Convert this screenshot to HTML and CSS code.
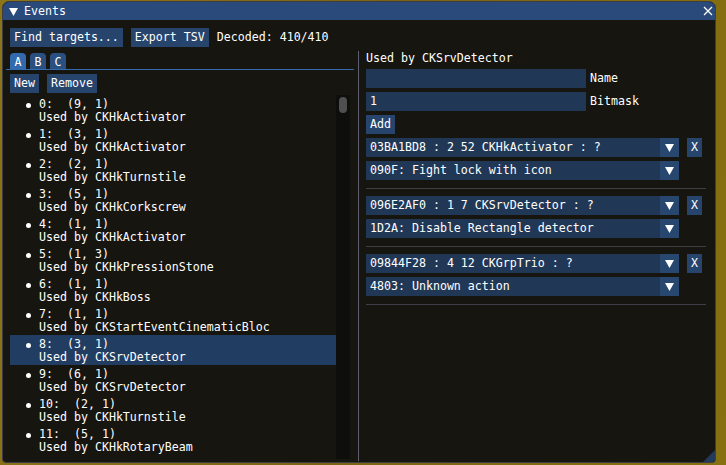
FILE: index.html
```html
<!DOCTYPE html>
<html>
<head>
<meta charset="utf-8">
<link rel="stylesheet" href="styles.css">
</head>
<body>
<div class="win">
  <div class="title">
    <svg class="collapse" width="9" height="8" viewBox="0 0 9 8"><polygon points="0,0 9,0 4.5,8" fill="#fff"/></svg>
    <span class="title-text">Events</span>
    <svg class="close" width="10" height="10" viewBox="0 0 10 10"><path d="M1 1 L9 9 M9 1 L1 9" stroke="#fff" stroke-width="1.3"/></svg>
  </div>
  <div class="body">
    <div class="toolbar">
      <div class="btn">Find targets...</div>
      <div class="btn">Export TSV</div>
      <span class="txt">Decoded: 410/410</span>
    </div>
    <div class="cols">
      <div class="left">
        <div class="tabbar">
          <div class="tab active">A</div>
          <div class="tab">B</div>
          <div class="tab">C</div>
        </div>
        <div class="btnrow">
          <div class="btn">New</div>
          <div class="btn">Remove</div>
        </div>
        <div class="listwrap">
          <div class="list">
            <div class="row"><span class="bullet"></span><div class="rt"><div>0:  (9, 1)</div><div>Used by CKHkActivator</div></div></div>
            <div class="row"><span class="bullet"></span><div class="rt"><div>1:  (3, 1)</div><div>Used by CKHkActivator</div></div></div>
            <div class="row"><span class="bullet"></span><div class="rt"><div>2:  (2, 1)</div><div>Used by CKHkTurnstile</div></div></div>
            <div class="row"><span class="bullet"></span><div class="rt"><div>3:  (5, 1)</div><div>Used by CKHkCorkscrew</div></div></div>
            <div class="row"><span class="bullet"></span><div class="rt"><div>4:  (1, 1)</div><div>Used by CKHkActivator</div></div></div>
            <div class="row"><span class="bullet"></span><div class="rt"><div>5:  (1, 3)</div><div>Used by CKHkPressionStone</div></div></div>
            <div class="row"><span class="bullet"></span><div class="rt"><div>6:  (1, 1)</div><div>Used by CKHkBoss</div></div></div>
            <div class="row"><span class="bullet"></span><div class="rt"><div>7:  (1, 1)</div><div>Used by CKStartEventCinematicBloc</div></div></div>
            <div class="row selected"><span class="bullet"></span><div class="rt"><div>8:  (3, 1)</div><div>Used by CKSrvDetector</div></div></div>
            <div class="row"><span class="bullet"></span><div class="rt"><div>9:  (6, 1)</div><div>Used by CKSrvDetector</div></div></div>
            <div class="row"><span class="bullet"></span><div class="rt"><div>10:  (2, 1)</div><div>Used by CKHkTurnstile</div></div></div>
            <div class="row"><span class="bullet"></span><div class="rt"><div>11:  (5, 1)</div><div>Used by CKHkRotaryBeam</div></div></div>
          </div>
          <div class="scrollbar"><div class="thumb"></div></div>
        </div>
      </div>
      <div class="vsep"></div>
      <div class="right">
        <div class="line">Used by CKSrvDetector</div>
        <div class="field"><div class="input"></div><span class="lbl">Name</span></div>
        <div class="field"><div class="input">1</div><span class="lbl">Bitmask</span></div>
        <div class="field"><div class="btn">Add</div></div>

        <div class="field">
          <div class="combo"><span class="ctext">03BA1BD8 : 2 52 CKHkActivator : ?</span><span class="arrow"><svg width="9" height="8" viewBox="0 0 9 8"><polygon points="0,0 9,0 4.5,8" fill="#fff"/></svg></span></div>
          <div class="btn xbtn">X</div>
        </div>
        <div class="field">
          <div class="combo"><span class="ctext">090F: Fight lock with icon</span><span class="arrow"><svg width="9" height="8" viewBox="0 0 9 8"><polygon points="0,0 9,0 4.5,8" fill="#fff"/></svg></span></div>
        </div>
        <div class="hsep"></div>

        <div class="field first">
          <div class="combo"><span class="ctext">096E2AF0 : 1 7 CKSrvDetector : ?</span><span class="arrow"><svg width="9" height="8" viewBox="0 0 9 8"><polygon points="0,0 9,0 4.5,8" fill="#fff"/></svg></span></div>
          <div class="btn xbtn">X</div>
        </div>
        <div class="field">
          <div class="combo"><span class="ctext">1D2A: Disable Rectangle detector</span><span class="arrow"><svg width="9" height="8" viewBox="0 0 9 8"><polygon points="0,0 9,0 4.5,8" fill="#fff"/></svg></span></div>
        </div>
        <div class="hsep"></div>

        <div class="field first">
          <div class="combo"><span class="ctext">09844F28 : 4 12 CKGrpTrio : ?</span><span class="arrow"><svg width="9" height="8" viewBox="0 0 9 8"><polygon points="0,0 9,0 4.5,8" fill="#fff"/></svg></span></div>
          <div class="btn xbtn">X</div>
        </div>
        <div class="field">
          <div class="combo"><span class="ctext">4803: Unknown action</span><span class="arrow"><svg width="9" height="8" viewBox="0 0 9 8"><polygon points="0,0 9,0 4.5,8" fill="#fff"/></svg></span></div>
        </div>
        <div class="hsep"></div>
      </div>
    </div>
  </div>
  <div class="grip"></div>
</div>
</body>
</html>
```
FILE: styles.css
```css
html, body {
  margin: 0;
  padding: 0;
}
body {
  width: 726px;
  height: 465px;
  overflow: hidden;
  background: linear-gradient(100deg, #8c7418 0%, #7a6412 50%, #86700f 100%);
  font-family: "DejaVu Sans Mono", "Liberation Mono", monospace;
  font-size: 11.62px;
  line-height: 13px;
  color: #fff;
}
.win {
  position: relative;
  margin: 1px 0 0 2px;
  width: 714px;
  height: 462px;
  box-sizing: border-box;
  border: 1px solid #3d3d46;
  border-radius: 7px 7px 4px 4px;
  background: #16150f;
  overflow: hidden;
  display: flex;
  flex-direction: column;
}
.title {
  height: 18px;
  flex: none;
  background: #294a7a;
  display: flex;
  align-items: center;
  padding: 0 0 0 6px;
}
.collapse {
  margin-top: 1px;
}
.title-text {
  margin-left: 6px;
  flex: 1;
}
.close {
  margin-right: 2px;
  margin-top: -1px;
}
.body {
  flex: 1;
  padding: 8px 7px 0 7px;
  display: flex;
  flex-direction: column;
  min-height: 0;
}
.toolbar {
  display: flex;
  gap: 8px;
  align-items: center;
  height: 19px;
  flex: none;
}
.btn {
  height: 19px;
  box-sizing: border-box;
  padding: 3px 4px;
  background: #26446c;
  white-space: pre;
  flex: none;
}
.txt {
  white-space: pre;
}
.cols {
  margin-top: 4px;
  flex: 1;
  display: flex;
  min-height: 0;
}
.left {
  width: 340px;
  flex: none;
  display: flex;
  flex-direction: column;
}
.tabbar {
  position: relative;
  display: flex;
  gap: 4px;
  padding-top: 2px;
  height: 17px;
  box-sizing: content-box;
}
.tabbar::after {
  content: "";
  position: absolute;
  left: -4px;
  right: -4px;
  bottom: 0;
  height: 1px;
  background: #3369ad;
}
.tab {
  width: 16px;
  height: 17px;
  box-sizing: border-box;
  padding-top: 3px;
  text-align: center;
  background: #2a4f81;
  border-radius: 4px 4px 0 0;
}
.tab.active {
  background: #3369ad;
}
.btnrow {
  display: flex;
  gap: 8px;
  margin-top: 4px;
  flex: none;
}
.listwrap {
  margin-top: 2px;
  flex: 1;
  display: flex;
  min-height: 0;
  margin-bottom: 3px;
}
.list {
  width: 326px;
  overflow: hidden;
}
.row {
  position: relative;
  height: 30px;
  box-sizing: border-box;
  padding: 3px 0 0 29px;
  white-space: pre;
}
.row.selected {
  background: #223d62;
}
.bullet {
  position: absolute;
  left: 16px;
  top: 8px;
  width: 5px;
  height: 5px;
  border-radius: 50%;
  background: #fff;
}
.scrollbar {
  width: 14px;
  background: #0e0e0c;
  padding: 2px 3px;
  box-sizing: border-box;
}
.thumb {
  height: 16px;
  border-radius: 4px;
  background: #4f4f4f;
}
.vsep {
  width: 1px;
  margin-left: 8px;
  margin-bottom: 1px;
  background: #5e5e70;
  flex: none;
}
.right {
  margin-left: 7px;
  padding-top: 1px;
  width: 340px;
  display: flex;
  flex-direction: column;
}
.line {
  height: 13px;
  white-space: pre;
}
.field {
  display: flex;
  gap: 8px;
  align-items: center;
  margin-top: 4px;
  height: 19px;
}
.field.first {
  margin-top: 7px;
}
.input {
  width: 220px;
  height: 19px;
  box-sizing: border-box;
  padding: 3px 4px;
  background: #213756;
}
.lbl {
  margin-left: -4px;
  white-space: pre;
}
.combo {
  width: 313px;
  height: 19px;
  display: flex;
  background: #213756;
}
.ctext {
  flex: 1;
  padding: 3px 4px;
  white-space: pre;
}
.arrow {
  width: 19px;
  height: 19px;
  background: #27476f;
  display: flex;
  align-items: center;
  justify-content: center;
}
.arrow svg {
  margin-top: 1px;
}
.xbtn {
  width: 15px;
  text-align: center;
  padding: 3px 0;
}
.hsep {
  margin-top: 8px;
  height: 1px;
  background: #3e3e47;
}
.grip {
  position: absolute;
  right: 0;
  bottom: 0;
  width: 0;
  height: 0;
  border-left: 12px solid transparent;
  border-bottom: 12px solid #233a5a;
}
```
